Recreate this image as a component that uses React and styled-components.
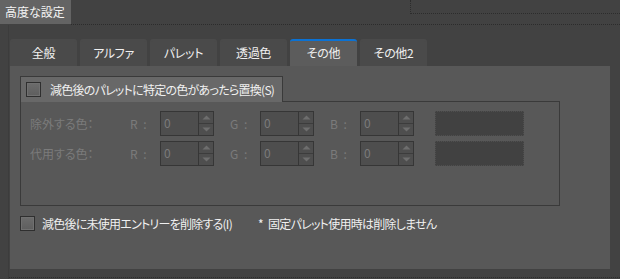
import React from "react";
import styled, { createGlobalStyle } from "styled-components";

const Global = createGlobalStyle`
  html, body { margin: 0; padding: 0; background: #424242; }
  body {
    font-family: "Noto Sans CJK JP", "Noto Sans", sans-serif;
    font-size: 12px;
    font-feature-settings: "palt";
    -webkit-font-smoothing: antialiased;
  }
`;

const Frame = styled.div`
  width: 620px;
  height: 279px;
  background: #424242;
  display: flex;
  flex-direction: column;
  overflow: hidden;
`;

const TopBar = styled.div`
  display: flex;
  height: 25px;
  flex: none;
`;

const TitleTab = styled.div`
  width: 71px;
  height: 24px;
  background: #646464;
  color: #f4f4f4;
  line-height: 23px;
  padding-left: 5px;
  box-sizing: border-box;
  white-space: nowrap;
`;

const TopFill = styled.div`
  flex: 1;
  height: 24px;
  border-bottom: 1px dotted #2c2c2c;
  display: flex;
  justify-content: flex-end;
  align-items: flex-start;
`;

const UpperPane = styled.div`
  width: 209px;
  height: 13px;
  border-left: 1px dotted #2c2c2c;
  border-bottom: 1px dotted #2c2c2c;
`;

const Body = styled.div`
  flex: 1;
  display: flex;
  flex-direction: column;
  padding: 14px 3px 0 1px;
  border-left: 1px solid #3c3c3c;
  margin: 0 7px 0 8px;
`;

const TabBar = styled.div`
  display: flex;
  gap: 3px;
  height: 27px;
  flex: none;
`;

const Tab = styled.div`
  width: 67px;
  height: 27px;
  box-sizing: border-box;
  border-radius: 3px 3px 0 0;
  background: ${(p) => (p.$active ? "#5c5c5c" : "#4a4a4a")};
  border-top: 2px solid ${(p) => (p.$active ? "#0b72d4" : "#4a4a4a")};
  color: #f0f0f0;
  display: flex;
  align-items: center;
  justify-content: center;
  padding-bottom: 2px;
  white-space: nowrap;
  letter-spacing: -0.3px;
`;

const Panel = styled.div`
  width: 600px;
  height: 203px;
  flex: none;
  background: #585858;
  box-sizing: border-box;
  padding: 10px 0 0 10px;
  display: flex;
  flex-direction: column;
`;

const BottomStrip = styled.div`
  flex: none;
  height: 8px;
  border-bottom: 1px dotted #2e2e2e;
  margin-left: -1px;
  margin-right: -10px;
`;

const Group = styled.div`
  display: flex;
  flex-direction: column;
  width: 540px;
`;

const GroupHeader = styled.label`
  position: relative;
  z-index: 1;
  align-self: flex-start;
  width: 263px;
  height: 26px;
  margin-bottom: -1px;
  box-sizing: border-box;
  background: #686868;
  border: 1px solid #3a3a3a;
  border-bottom: none;
  display: flex;
  align-items: center;
  padding-left: 5px;
  gap: 9px;
  color: #f0f0f0;
  white-space: nowrap;
  letter-spacing: -0.75px;
`;

const GroupBox = styled.div`
  height: 105px;
  box-sizing: border-box;
  border: 1px solid #3a3a3a;
  padding: 9px 0 0 9px;
  display: flex;
  flex-direction: column;
  gap: 5px;
`;

const Check = styled.span`
  width: 15px;
  height: 15px;
  box-sizing: border-box;
  flex: none;
  border: 1px solid #2f2f2f;
  background: linear-gradient(#6c6c6c, #5e5e5e);
  box-shadow: inset 0 0 0 1px #707070;
`;

const Row = styled.div`
  display: flex;
  align-items: center;
  height: 25px;
`;

const RowLabel = styled.span`
  width: 100px;
  color: #7b7b7b;
  white-space: nowrap;
`;

const ChLabel = styled.span`
  width: 30px;
  color: #7b7b7b;
  margin-left: ${(p) => p.$gap || 0}px;
  white-space: nowrap;
  letter-spacing: 1.5px;
`;

const Spin = styled.div`
  width: 54px;
  height: 25px;
  box-sizing: border-box;
  border: 1px solid #363636;
  background: #4e4e4e;
  display: flex;
`;

const SpinValue = styled.span`
  flex: 1;
  color: #7b7b7b;
  padding-left: 3px;
  line-height: 22px;
`;

const SpinButtons = styled.div`
  width: 14px;
  border-left: 1px solid #363636;
  display: flex;
  flex-direction: column;
`;

const SpinBtn = styled.div`
  flex: 1;
  display: flex;
  align-items: center;
  justify-content: center;
  & + & {
    border-top: 1px solid #3c3c3c;
  }
`;

const Swatch = styled.div`
  width: 89px;
  height: 25px;
  box-sizing: border-box;
  margin-left: 21px;
  background: #414141;
  border: 1px dotted #4f4f4f;
`;

const OptionRow = styled.div`
  display: flex;
  align-items: center;
  margin-top: 10px;
  height: 15px;
  color: #f0f0f0;
  white-space: nowrap;
  letter-spacing: -0.75px;
`;

const OptionText = styled.span`
  margin-left: 7px;
`;

const Note = styled.span`
  margin-left: 26px;
`;

const Arrow = ({ up }) => (
  <svg width="9" height="5" viewBox="0 0 9 5">
    <path d={up ? "M0.5 4.5 L4.5 0.5 L8.5 4.5 Z" : "M0.5 0.5 L4.5 4.5 L8.5 0.5 Z"} fill="#6e6e6e" />
  </svg>
);

const SpinBox = () => (
  <Spin>
    <SpinValue>0</SpinValue>
    <SpinButtons>
      <SpinBtn><Arrow up /></SpinBtn>
      <SpinBtn><Arrow /></SpinBtn>
    </SpinButtons>
  </Spin>
);

const ColorRow = ({ label }) => (
  <Row>
    <RowLabel>{label}</RowLabel>
    <ChLabel>R :</ChLabel>
    <SpinBox />
    <ChLabel $gap={16}>G :</ChLabel>
    <SpinBox />
    <ChLabel $gap={16}>B :</ChLabel>
    <SpinBox />
    <Swatch />
  </Row>
);

const tabs = ["全般", "アルファ", "パレット", "透過色", "その他", "その他2"];

export default function App() {
  return (
    <>
      <Global />
      <Frame>
        <TopBar>
          <TitleTab>高度な設定</TitleTab>
          <TopFill>
            <UpperPane />
          </TopFill>
        </TopBar>
        <Body>
          <TabBar>
            {tabs.map((t) => (
              <Tab key={t} $active={t === "その他"}>{t}</Tab>
            ))}
          </TabBar>
          <Panel>
            <Group>
              <GroupHeader>
                <Check />
                減色後のパレットに特定の色があったら置換(S)
              </GroupHeader>
              <GroupBox>
                <ColorRow label="除外する色：" />
                <ColorRow label="代用する色：" />
              </GroupBox>
            </Group>
            <OptionRow>
              <Check />
              <OptionText>減色後に未使用エントリーを削除する(I)</OptionText>
              <Note>*{"\u2002"}固定パレット使用時は削除しません</Note>
            </OptionRow>
          </Panel>
          <BottomStrip />
        </Body>
      </Frame>
    </>
  );
}
